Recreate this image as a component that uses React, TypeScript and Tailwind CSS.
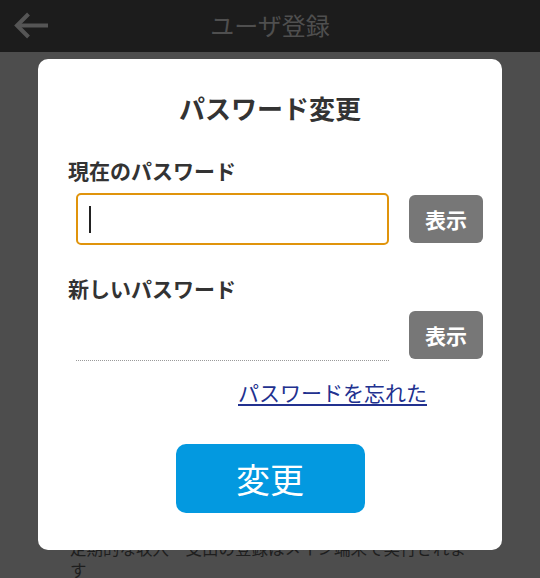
import React from "react";

const jp = { fontFamily: '"Noto Sans CJK JP", "Noto Sans", sans-serif' };

function ShowButton() {
  return (
    <button className="w-[74px] h-[48px] shrink-0 rounded-[6px] bg-[#777777] text-white text-[21px] font-bold leading-none">
      表示
    </button>
  );
}

export default function App() {
  return (
    <div className="relative w-[540px] h-[578px] overflow-hidden bg-[#4d4d4d]" style={jp}>
      {/* Header */}
      <header className="relative h-[52px] bg-[#1c1c1c] flex items-center justify-center">
        <svg
          className="absolute left-[13px] top-[9px]"
          width="38"
          height="32"
          viewBox="0 0 38 32"
          fill="none"
          stroke="#555555"
          strokeWidth="4"
        >
          <path d="M4 16.5 H35" />
          <path d="M15.5 5 L4 16.5 L15.5 28" />
        </svg>
        <h1 className="text-[24px] leading-none text-[#4f4f4f] -mt-[2px]">ユーザ登録</h1>
      </header>

      {/* Page content behind the dialog */}
      <div className="pt-[485px] pl-[70px] pr-[70px] text-[16.5px] leading-[22px] text-[#1e1e1e]">
        定期的な収入・支出の登録はメイン端末で実行されます
      </div>

      {/* Dialog */}
      <div className="absolute left-[38px] top-[59px] w-[464px] h-[491px] rounded-[10px] bg-white pt-[32px] flex flex-col">
        <h2 className="text-center text-[26px] leading-[34px] font-bold text-[#333333]">
          パスワード変更
        </h2>

        <div className="mt-[31px] pl-[30px] text-[21px] leading-[28px] font-bold text-[#333333]">
          現在のパスワード
        </div>
        <div className="mt-[9px] pl-[38px] flex items-center gap-[20px]">
          <div className="w-[313px] h-[52px] rounded-[5px] border-2 border-[#e0940c] flex items-center pl-[11px]">
            <span className="w-[1.5px] h-[27px] bg-[#222222]" />
          </div>
          <ShowButton />
        </div>

        <div className="mt-[29px] pl-[30px] text-[21px] leading-[28px] font-bold text-[#333333]">
          新しいパスワード
        </div>
        <div className="mt-[7px] pl-[38px] flex items-center gap-[20px]">
          <div className="w-[313px] h-[52px] border-b border-dotted border-[#9a9a9a]" />
          <ShowButton />
        </div>

        <div className="mt-[17px] w-[389px] text-right text-[21px] leading-[28px]">
          <a className="text-[#22318f] underline underline-offset-[3px]" href="#">
            パスワードを忘れた
          </a>
        </div>

        <div className="mt-[38px] flex justify-center">
          <button className="w-[189px] h-[69px] rounded-[10px] bg-[#0399e0] text-white text-[34px] leading-none">
            変更
          </button>
        </div>
      </div>
    </div>
  );
}
